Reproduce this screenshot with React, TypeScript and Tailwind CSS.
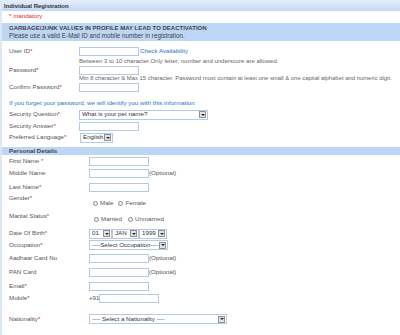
import React from 'react';

const Req = () => <span className="text-[#e0262b]">*</span>;

const TextBox = ({ w = 'w-[60px]' }: { w?: string }) => (
  <div className={`${w} h-[9px] border border-[#b3c9e8] bg-white`} />
);

const DropBtn = () => (
  <span className="ml-auto mr-[1px] flex h-[7px] w-[7px] shrink-0 items-center justify-center border border-[#8f8f8f] bg-[#e4e4e4]">
    <span className="h-0 w-0 border-l-[2px] border-r-[2px] border-t-[2px] border-l-transparent border-r-transparent border-t-[#222]" />
  </span>
);

const Select = ({ w, value }: { w: string; value: string }) => (
  <div className={`${w} flex h-[10px] items-center border border-[#b3c9e8] bg-white pl-[2px] text-[#333]`}>
    <span className="whitespace-nowrap">{value}</span>
    <DropBtn />
  </div>
);

const Radio = ({ label }: { label: string }) => (
  <span className="flex items-center gap-[2px]">
    <span className="h-[5px] w-[5px] rounded-full border border-[#8a8a8a] bg-[#f4f4f4]" />
    <span>{label}</span>
  </span>
);

const Row = ({ label, h, lw, children, top }: { label: React.ReactNode; h: string; lw: string; children?: React.ReactNode; top?: boolean }) => (
  <div className={`flex ${h} ${top ? 'items-start' : 'items-center'}`}>
    <div className={`${lw} shrink-0 whitespace-nowrap pl-[7px] ${top ? 'pt-[2px]' : ''}`}>{label}</div>
    {children}
  </div>
);

export default function App() {
  return (
    <div
      className="h-[335px] w-[400px] overflow-hidden border-l-2 border-[#dde8f6] bg-white text-[6.2px] leading-none text-[#555]"
      style={{ fontFamily: '"Liberation Sans", Arial, sans-serif' }}
    >
      <div className="flex h-[11px] items-center bg-gradient-to-b from-[#e6effb] to-[#c3d8f5] pl-[2px] text-[6px] font-bold text-[#333]">
        Individual Registration
      </div>
      <div className="flex h-[11px] items-center pl-[7px] text-[#e0262b]">* mandatory</div>
      <div className="mt-[1px] flex h-[18px] flex-col justify-center gap-[2px] bg-[#bdd6f6] pl-[7px]">
        <div className="text-[6px] font-bold text-[#444]">GARBAGE/JUNK VALUES IN PROFILE MAY LEAD TO DEACTIVATION</div>
        <div className="text-[6.3px] text-[#444]">Please use a valid E-Mail ID and mobile number in registration.</div>
      </div>

      <div className="mt-[5px]">
        <Row label={<>User ID<Req /></>} h="h-[11px]" lw="w-[77px]">
          <TextBox />
          <span className="ml-[1px] text-[#2a73c9]">Check Availability</span>
        </Row>
        <Row label="" h="h-[8px]" lw="w-[77px]">
          <span className="whitespace-nowrap text-[6px] text-[#666]">Between 3 to 10 character.Only letter, number and underscore are allowed.</span>
        </Row>
        <Row label={<>Password<Req /></>} h="h-[10px]" lw="w-[77px]">
          <TextBox />
        </Row>
        <Row label="" h="h-[8px]" lw="w-[77px]">
          <span className="whitespace-nowrap text-[5.9px] text-[#666]">Min 8 character &amp; Max 15 character. Password must contain at least one small &amp; one capital alphabet and numeric digit.</span>
        </Row>
        <Row label={<>Confirm Password<Req /></>} h="h-[9px]" lw="w-[77px]">
          <TextBox />
        </Row>
      </div>

      <div className="mt-[6px] flex h-[10px] items-center pl-[7px] text-[#2a73c9]">
        If you forget your password, we will identify you with this information
      </div>
      <div className="mt-[1px] flex flex-col gap-[1px]">
        <Row label={<>Security Question<Req /></>} h="h-[11px]" lw="w-[77px]">
          <Select w="w-[129px]" value="What is your pet name?" />
        </Row>
        <Row label={<>Security Answer<Req /></>} h="h-[10px]" lw="w-[77px]">
          <TextBox />
        </Row>
        <Row label={<>Preferred Language<Req /></>} h="h-[11px]" lw="w-[78px]">
          <Select w="w-[33px]" value="English" />
        </Row>
      </div>

      <div className="mt-[4px] flex h-[8px] items-center bg-[#bdd6f6] pl-[7px] font-bold text-[#444]">Personal Details</div>

      <div className="mt-[1px]">
        <Row label={<>First Name <Req /></>} h="h-[11px]" lw="w-[87px]">
          <TextBox />
        </Row>
        <Row label="Middle Name" h="h-[12px]" lw="w-[87px]">
          <TextBox />
          <span>(Optional)</span>
        </Row>
        <div className="mt-[3px]">
          <Row label={<>Last Name<Req /></>} h="h-[11px]" lw="w-[87px]">
            <TextBox />
          </Row>
        </div>
        <Row label={<>Gender<Req /></>} h="h-[18px]" lw="w-[91px]" top>
          <div className="mt-[7px] flex gap-[5px]">
            <Radio label="Male" />
            <Radio label="Female" />
          </div>
        </Row>
        <Row label={<>Marital Status<Req /></>} h="h-[15px]" lw="w-[92px]" top>
          <div className="mt-[5px] flex gap-[6px]">
            <Radio label="Married" />
            <Radio label="Unmarried" />
          </div>
        </Row>
        <div className="mt-[2px]">
          <Row label={<>Date Of Birth<Req /></>} h="h-[11px]" lw="w-[87px]">
            <div className="flex">
              <Select w="w-[23px]" value="01" />
              <Select w="w-[27px]" value="JAN" />
              <Select w="w-[28px]" value="1999" />
            </div>
          </Row>
          <Row label={<>Occupation<Req /></>} h="h-[12px]" lw="w-[87px]">
            <Select w="w-[79px]" value="----Select Occupation----" />
          </Row>
          <Row label="Aadhaar Card No" h="h-[14px]" lw="w-[87px]">
            <TextBox />
            <span>(Optional)</span>
          </Row>
          <Row label="PAN Card" h="h-[15px]" lw="w-[87px]">
            <TextBox />
            <span>(Optional)</span>
          </Row>
          <Row label={<>Email<Req /></>} h="h-[12px]" lw="w-[87px]">
            <TextBox />
          </Row>
          <Row label={<>Mobile<Req /></>} h="h-[13px]" lw="w-[87px]">
            <span className="w-[10px]">+91</span>
            <TextBox />
          </Row>
          <div className="mt-[8px]">
            <Row label={<>Nationality<Req /></>} h="h-[12px]" lw="w-[87px]">
              <Select w="w-[138px]" value="---- Select a Nationality ----" />
            </Row>
          </div>
        </div>
      </div>
    </div>
  );
}
